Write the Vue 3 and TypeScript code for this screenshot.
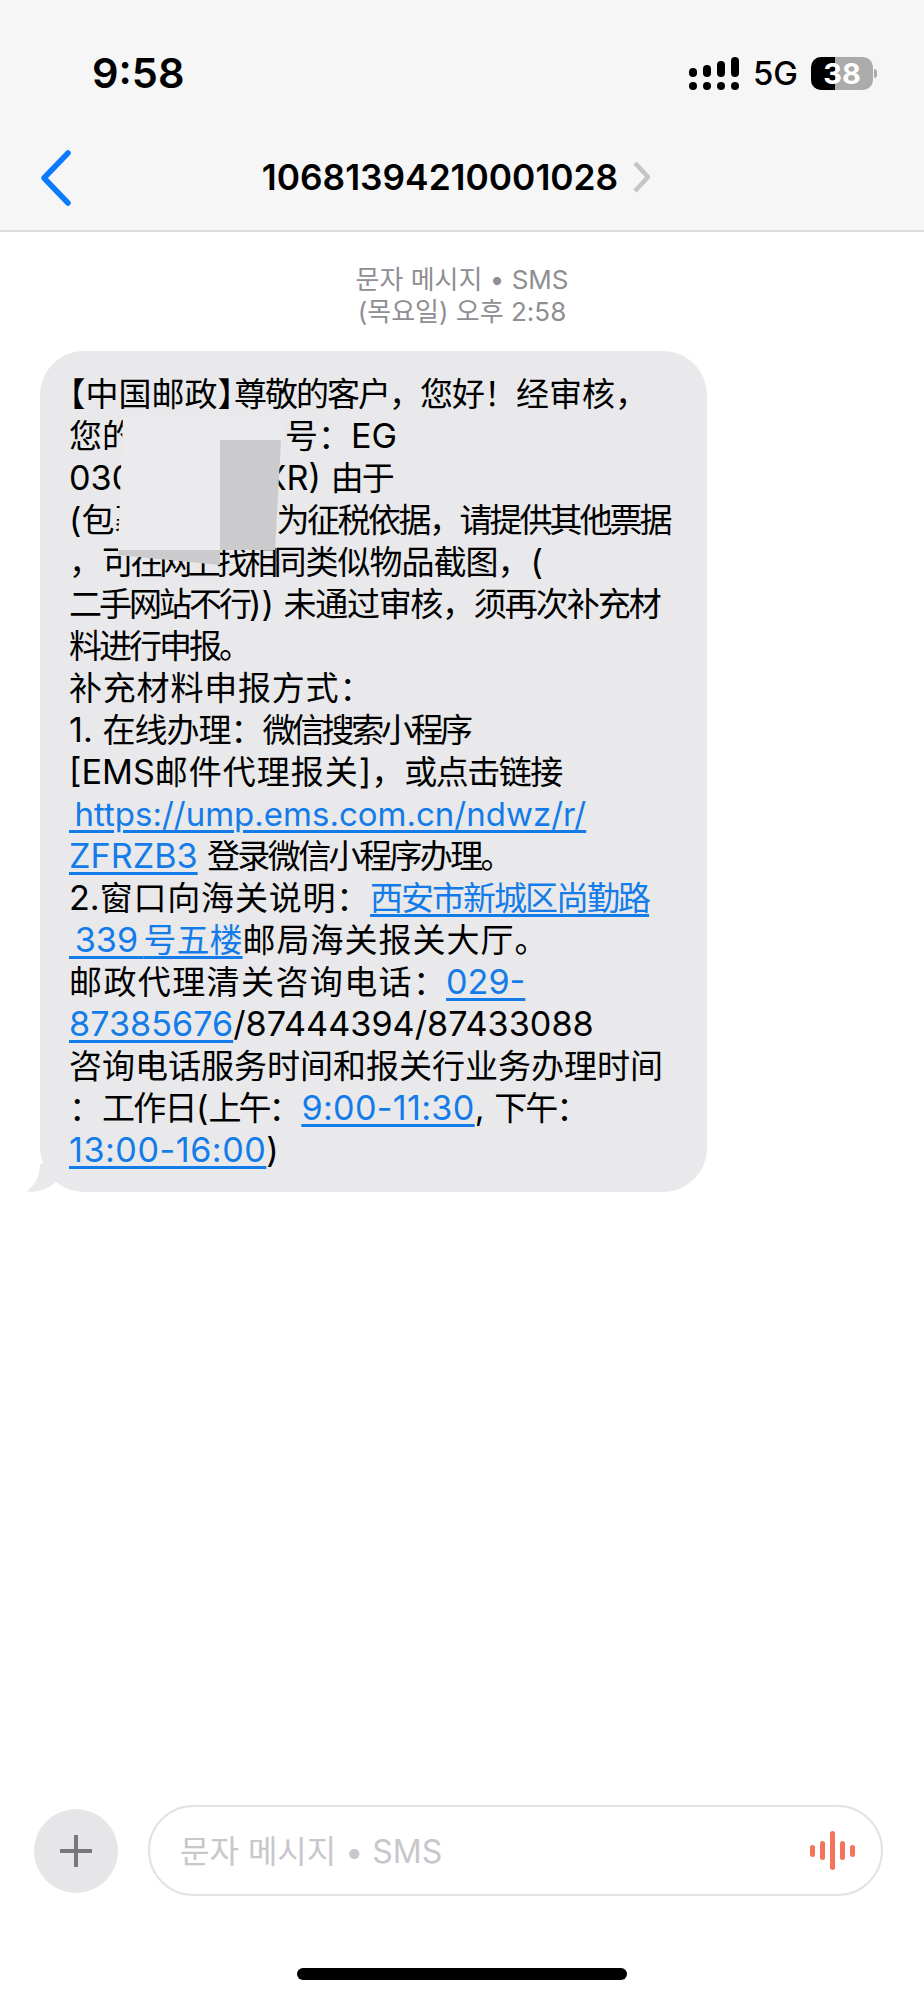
<script setup lang="ts">
type Seg = { t?: string; link?: boolean; lat?: boolean; halt?: boolean; ls?: number; gap?: number }
const lines: Seg[][] = [
  [{ t: '【中国邮政】', halt: true }, { t: '尊敬的客户，', ls: -2 }, { t: '您好！', ls: -1 }, { t: '经审核，' }],
  [{ t: '您的' }, { gap: 150 }, { t: '号：' }, { t: 'EG', lat: true }],
  [{ t: '030', lat: true }, { gap: 130 }, { t: 'XR) ', lat: true }, { t: '由于', ls: -2 }],
  [{ t: '(', lat: true }, { t: '包裹' }, { gap: 129 }, { t: '为征税依据，', ls: -2.5 }, { t: '请提供其他票据', ls: -3 }],
  [{ t: '，' }, { t: '可在网上找相', ls: -4.4 }, { t: '同类似物品截图', ls: -1 }, { t: '，' }, { t: '(', lat: true }],
  [{ t: '二手网站不行', ls: -3 }, { t: ')) ', lat: true }, { t: '未通过审核，', ls: -1.3 }, { t: '须再次补充材', ls: -2 }],
  [{ t: '料进行申报', ls: -3 }, { t: '。' }],
  [{ t: '补充材料申报方式：', ls: 0.8 }],
  [{ t: '1. ', lat: true }, { t: '在线办理：', ls: -1 }, { t: '微信搜索小程序', ls: -3.4 }],
  [{ t: '[EMS', lat: true }, { t: '邮件代理报关', ls: 1 }, { t: ']', lat: true }, { t: '，' }, { t: '或点击链接', ls: -1.5 }],
  [{ t: '\u2006https://ump.ems.com.cn/ndwz/r/', link: true }],
  [{ t: 'ZFRZB3', link: true, lat: true }, { t: ' ' }, { t: '登录微信小程序办理。', ls: -2.6 }],
  [{ t: '2.', lat: true }, { t: '窗口向海关说明：', ls: 0.8 }, { t: '西安市新城区尚勤路', link: true, ls: -2 }],
  [{ t: '\u2006339', link: true, lat: true }, { t: '\u2006', link: true }, { t: '号五楼', link: true }, { t: '邮局海关报关大厅', ls: 1 }, { t: '。' }],
  [{ t: '邮政代理清关咨询电话', ls: 1.4 }, { t: '：' }, { t: '029-', link: true, lat: true }],
  [{ t: '87385676', link: true, lat: true }, { t: '/87444394/87433088', lat: true }],
  [{ t: '咨询电话服务时间和报关行业务办理时间' }],
  [{ t: '：' }, { t: '工作日', ls: -1.7 }, { t: '(', lat: true }, { t: '上午', ls: -3 }, { t: '：' }, { t: '9:00-11:30', link: true, lat: true, ls: 0.3 }, { t: ', ', lat: true }, { t: '下午', ls: -2 }, { t: '：' }],
  [{ t: '13:00-16:00', link: true, lat: true, ls: 0.5 }, { t: ')', lat: true }],
]
const signal = [9, 12, 16, 20]
const wave = [12, 19, 39, 19, 12]
</script>

<template>
  <div class="page" lang="zh-CN">
    <header class="head">
      <div class="status">
        <span class="time">9:58</span>
        <div class="status-right">
          <div class="signal">
            <div v-for="(h, i) in signal" :key="i" class="sig-col">
              <i class="sig-top" :style="{ height: h + 'px' }"></i>
              <i class="sig-dot"></i>
            </div>
          </div>
          <span class="net">5G</span>
          <div class="batt">
            <div class="batt-body">
              <i class="batt-fill"></i>
              <span class="batt-num">38</span>
            </div>
            <i class="batt-nub"></i>
          </div>
        </div>
      </div>
      <nav class="nav">
        <svg class="back" width="34" height="56" viewBox="0 0 34 56" fill="none">
          <path d="M30 3 6 28l24 25" stroke="#0a7aff" stroke-width="5.5" stroke-linecap="round" stroke-linejoin="round" />
        </svg>
        <div class="title">
          <span>10681394210001028</span>
          <svg width="20" height="32" viewBox="0 0 20 32" fill="none">
            <path d="M3 2 16 16 3 30" stroke="#c4c4c7" stroke-width="4.5" stroke-linejoin="round" />
          </svg>
        </div>
      </nav>
    </header>

    <main class="chat">
      <div class="meta">
        <div>문자 메시지 • SMS</div>
        <div>(목요일) 오후 2:58</div>
      </div>
      <div class="bubble">
        <div v-for="(line, i) in lines" :key="i" class="line">
          <template v-for="(s, j) in line" :key="j">
            <span v-if="s.gap" class="gap" :style="{ width: s.gap + 'px' }"></span>
            <span
              v-else
              :class="{ link: s.link, lat: s.lat, halt: s.halt }"
              :style="s.ls ? { letterSpacing: s.ls + 'px' } : undefined"
            >{{ s.t }}</span>
          </template>
        </div>
        <svg class="redact" width="180" height="160" viewBox="0 0 180 160">
          <polygon points="13,6 172,6 172,29 110,29 110,139 8,139" fill="#ebebed" />
          <polygon points="110,29 171,29 165,139 110,139" fill="#cbcbcd" />
          <polygon points="8,139 110,139 110,154 8,144" fill="#cbcbcd" />
        </svg>
        <svg class="tail" width="34" height="28" viewBox="0 0 34 28">
          <path d="M14 0C14 12 9 22 0 27.5 8 28.5 20 27 30 18L34 0Z" fill="#e9e9eb" />
        </svg>
      </div>
    </main>

    <footer class="composer">
      <button class="plus" type="button">
        <svg width="32" height="32" viewBox="0 0 32 32" fill="none">
          <path d="M16 1v30M1 16h30" stroke="#77777c" stroke-width="4" stroke-linecap="round" />
        </svg>
      </button>
      <div class="input">
        <span class="placeholder">문자 메시지 • SMS</span>
        <div class="wave">
          <i v-for="(h, i) in wave" :key="i" :style="{ height: h + 'px' }"></i>
        </div>
      </div>
    </footer>
    <div class="home-row"><i class="home"></i></div>
  </div>
</template>

<style scoped>
.page {
  width: 924px;
  height: 2000px;
  display: flex;
  flex-direction: column;
  background: #fff;
  font-family: Inter, "Noto Sans CJK SC", sans-serif;
  color: #000;
  overflow: hidden;
}
.head {
  height: 232px;
  box-sizing: border-box;
  background: #f6f6f6;
  border-bottom: 2px solid #dcdcdc;
  flex: none;
}
.status {
  height: 135px;
  box-sizing: border-box;
  padding: 50px 47px 0 92px;
  display: flex;
  justify-content: space-between;
  align-items: flex-start;
}
.time {
  font-size: 41.5px;
  line-height: 46px;
  font-weight: 600;
}
.status-right {
  display: flex;
  align-items: center;
  height: 46px;
}
.signal {
  display: flex;
  gap: 6px;
  margin-right: 14px;
}
.sig-col {
  width: 8px;
  height: 33px;
  display: flex;
  flex-direction: column;
  justify-content: flex-end;
  gap: 5px;
}
.sig-top,
.sig-dot {
  display: block;
  background: #000;
  border-radius: 4px;
}
.sig-dot {
  height: 8px;
}
.net {
  font-size: 33px;
  font-weight: 500;
  line-height: 46px;
  margin-right: 13px;
}
.batt {
  display: flex;
  align-items: center;
}
.batt-body {
  position: relative;
  width: 62px;
  height: 33px;
  border-radius: 10px;
  overflow: hidden;
  background: #ababab;
  display: flex;
  align-items: center;
  justify-content: center;
}
.batt-fill {
  position: absolute;
  left: 0;
  top: 0;
  bottom: 0;
  width: 24px;
  background: #000;
}
.batt-num {
  position: relative;
  color: #fff;
  font-size: 29px;
  line-height: 33px;
  font-weight: 700;
}
.batt-nub {
  width: 3px;
  height: 9px;
  margin-left: 1px;
  background: #ababab;
  border-radius: 0 3px 3px 0;
}
.nav {
  position: relative;
  height: 84px;
  display: flex;
  align-items: center;
  justify-content: center;
}
.back {
  position: absolute;
  left: 38px;
  top: 15px;
}
.title {
  display: flex;
  align-items: center;
  gap: 14px;
  font-size: 35.3px;
  font-weight: 600;
  margin-left: -10px;
}
.chat {
  flex: 1;
  min-height: 0;
}
.meta {
  padding-top: 32px;
  text-align: center;
  font-size: 26px;
  line-height: 32px;
  color: #8e8e93;
}
.bubble {
  position: relative;
  width: 667px;
  box-sizing: border-box;
  margin: 23px 0 0 40px;
  padding: 22px 10px 21px 29px;
  background: #e9e9eb;
  border-radius: 44px;
  font-size: 33px;
  line-height: 42px;
}
.line {
  height: 42px;
  white-space: pre;
}
.gap {
  display: inline-block;
}
.lat {
  font-size: 34.2px;
}
.halt {
  font-feature-settings: "halt";
}
.link {
  color: #147ce8;
  text-decoration: underline;
  text-decoration-thickness: 2.5px;
  text-underline-offset: 4px;
}
.redact {
  position: absolute;
  left: 70px;
  top: 60px;
}
.tail {
  position: absolute;
  left: -14px;
  bottom: 0;
}
.composer {
  flex: none;
  display: flex;
  align-items: center;
  gap: 30px;
  padding: 0 41px 0 34px;
  height: 91px;
}
.plus {
  width: 84px;
  height: 84px;
  padding: 0;
  border: 0;
  border-radius: 50%;
  background: #e6e6e9;
  display: flex;
  align-items: center;
  justify-content: center;
  flex: none;
}
.input {
  flex: 1;
  height: 91px;
  box-sizing: border-box;
  border: 2px solid #e3e3e3;
  border-radius: 46px;
  padding: 0 26px 0 30px;
  display: flex;
  align-items: center;
  justify-content: space-between;
}
.placeholder {
  font-size: 32px;
  color: #c7c7cc;
  margin-bottom: 3px;
}
.wave {
  display: flex;
  align-items: center;
  gap: 5px;
}
.wave i {
  display: block;
  width: 5px;
  border-radius: 3px;
  background: #f5735a;
}
.home-row {
  flex: none;
  height: 104px;
  box-sizing: border-box;
  padding-top: 72px;
  display: flex;
  justify-content: center;
}
.home {
  display: block;
  width: 330px;
  height: 12px;
  border-radius: 6px;
  background: #000;
}
</style>
